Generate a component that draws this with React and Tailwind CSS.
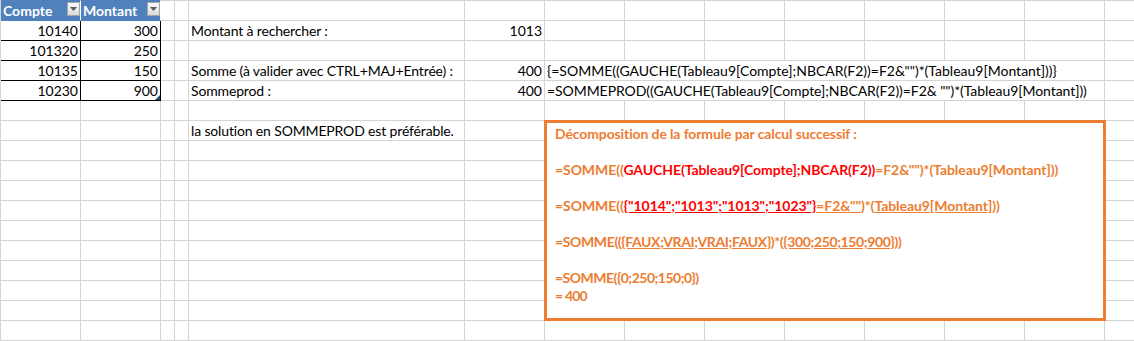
import clsx from 'clsx'

// column widths, right gridline included (A, B, C, D, E, F, G..N)
const W = [
  'w-[80px]', 'w-[80px]', 'w-[14px]', 'w-[14px]', 'w-[276px]', 'w-[80px]',
  'w-[80px]', 'w-[80px]', 'w-[80px]', 'w-[80px]', 'w-[80px]', 'w-[80px]', 'w-[80px]', 'w-[80px]',
]

const TABLE = [
  ['10140', '300'],
  ['101320', '250'],
  ['10135', '150'],
  ['10230', '900'],
]

// sheet text by row index -> { e, f, g }
const SHEET = {
  1: { e: 'Montant à rechercher :', f: '1013' },
  3: {
    e: 'Somme (à valider avec CTRL+MAJ+Entrée) :',
    f: '400',
    g: '{=SOMME((GAUCHE(Tableau9[Compte];NBCAR(F2))=F2&"")*(Tableau9[Montant]))}',
  },
  4: {
    e: 'Sommeprod :',
    f: '400',
    g: '=SOMMEPROD((GAUCHE(Tableau9[Compte];NBCAR(F2))=F2& "")*(Tableau9[Montant]))',
  },
  6: { e: 'la solution en SOMMEPROD est préférable.' },
}

function Cell({ w, first, tone = 'grid', align = 'left', className, children }) {
  return (
    <div
      className={clsx(
        'relative box-border shrink-0 whitespace-nowrap border-r border-b leading-[19px]',
        w,
        first ? 'h-[21px] border-t' : 'h-5',
        tone === 'grid' && 'border-[#d4d4d4]',
        tone === 'table' && 'border-r-black border-b-black',
        tone === 'head' && 'border-t-[#4f81bd] border-b-[#4f81bd] border-r-white bg-[#4f81bd]',
        align === 'right' ? 'pr-[2px] text-right' : 'pl-[2px]',
        className
      )}
    >
      {children}
    </div>
  )
}

function FilterButton() {
  return (
    <span className="ml-auto mt-px flex h-[14px] w-[13px] items-center justify-center border border-[#a5a5a5] bg-gradient-to-b from-[#fafafa] to-[#d9d9d9]">
      <svg width="7" height="4" viewBox="0 0 7 4">
        <path d="M0 0h7L3.5 4z" fill="#5a5a5a" />
      </svg>
    </span>
  )
}

function HeadCell({ w, label }) {
  return (
    <Cell w={w} first tone="head" className="flex items-start font-bold text-white">
      <span className="leading-[19px]">{label}</span>
      <FilterButton />
    </Cell>
  )
}

function SheetRow({ index }) {
  const first = index === 0
  const table = index >= 1 && index <= 4 ? TABLE[index - 1] : null
  const text = SHEET[index] || {}

  return (
    <div className="flex">
      {first ? (
        <>
          <HeadCell w={W[0]} label="Compte" />
          <HeadCell w={W[1]} label="Montant" />
        </>
      ) : table ? (
        <>
          <Cell w={W[0]} tone="table" align="right">{table[0]}</Cell>
          <Cell w={W[1]} tone="table" align="right">
            {table[1]}
            {index === 4 && (
              <svg className="absolute right-0 bottom-0" width="5" height="5" viewBox="0 0 5 5">
                <path d="M5 0v5H0z" fill="#1f4e79" />
              </svg>
            )}
          </Cell>
        </>
      ) : (
        <>
          <Cell w={W[0]} />
          <Cell w={W[1]} />
        </>
      )}
      <Cell w={W[2]} first={first} />
      <Cell w={W[3]} first={first} />
      <Cell w={W[4]} first={first} className="tracking-[-0.15px]">{text.e}</Cell>
      <Cell w={W[5]} first={first} align="right">{text.f}</Cell>
      {text.g ? (
        <Cell w="w-[560px]" className={index === 4 ? 'tracking-[-0.06px]' : ''}>{text.g}</Cell>
      ) : (
        W.slice(6, 13).map((w, i) => <Cell key={i} w={w} first={first} />)
      )}
      <Cell w={W[13]} first={first} />
    </div>
  )
}

function Breakdown() {
  return (
    <div className="absolute left-[543px] top-[120px] box-border h-[201px] w-[562px] border-[3px] border-[#ed7d31] bg-white pl-[8px] pt-[2px] text-[14px] font-bold leading-[18px] text-[#ed7d31]">
      <p className="tracking-[-0.12px]">Décomposition de la formule par calcul successif :</p>
      <p>&nbsp;</p>
      <p className="tracking-[-0.08px]">
        =SOMME((<span className="text-[#ff0000]">GAUCHE(Tableau9[Compte];NBCAR(F2))</span>=F2&amp;"")*(Tableau9[Montant]))
      </p>
      <p>&nbsp;</p>
      <p className="tracking-[-0.06px]">
        =SOMME((<span className="text-[#ff0000] underline">{'{"1014";"1013";"1013";"1023"}'}</span>
        <span className="underline">=F2&amp;""</span>)*(<span className="underline">Tableau9[Montant]</span>))
      </p>
      <p>&nbsp;</p>
      <p className="tracking-[-0.37px]">
        =SOMME((<span className="underline">{'{FAUX;VRAI;VRAI;FAUX}'}</span>)*(<span className="underline">{'{300;250;150;900}'}</span>))
      </p>
      <p>&nbsp;</p>
      <p className="tracking-[-0.5px]">{'=SOMME({0;250;150;0})'}</p>
      <p className="tracking-[-0.8px]">= 400</p>
    </div>
  )
}

export default function App() {
  return (
    <div className="relative h-[341px] w-[1134px] overflow-hidden border-l border-[#d4d4d4] bg-white font-['Lato',sans-serif] text-[14px] text-black">
      {Array.from({ length: 17 }, (_, i) => (
        <SheetRow key={i} index={i} />
      ))}
      <Breakdown />
    </div>
  )
}
